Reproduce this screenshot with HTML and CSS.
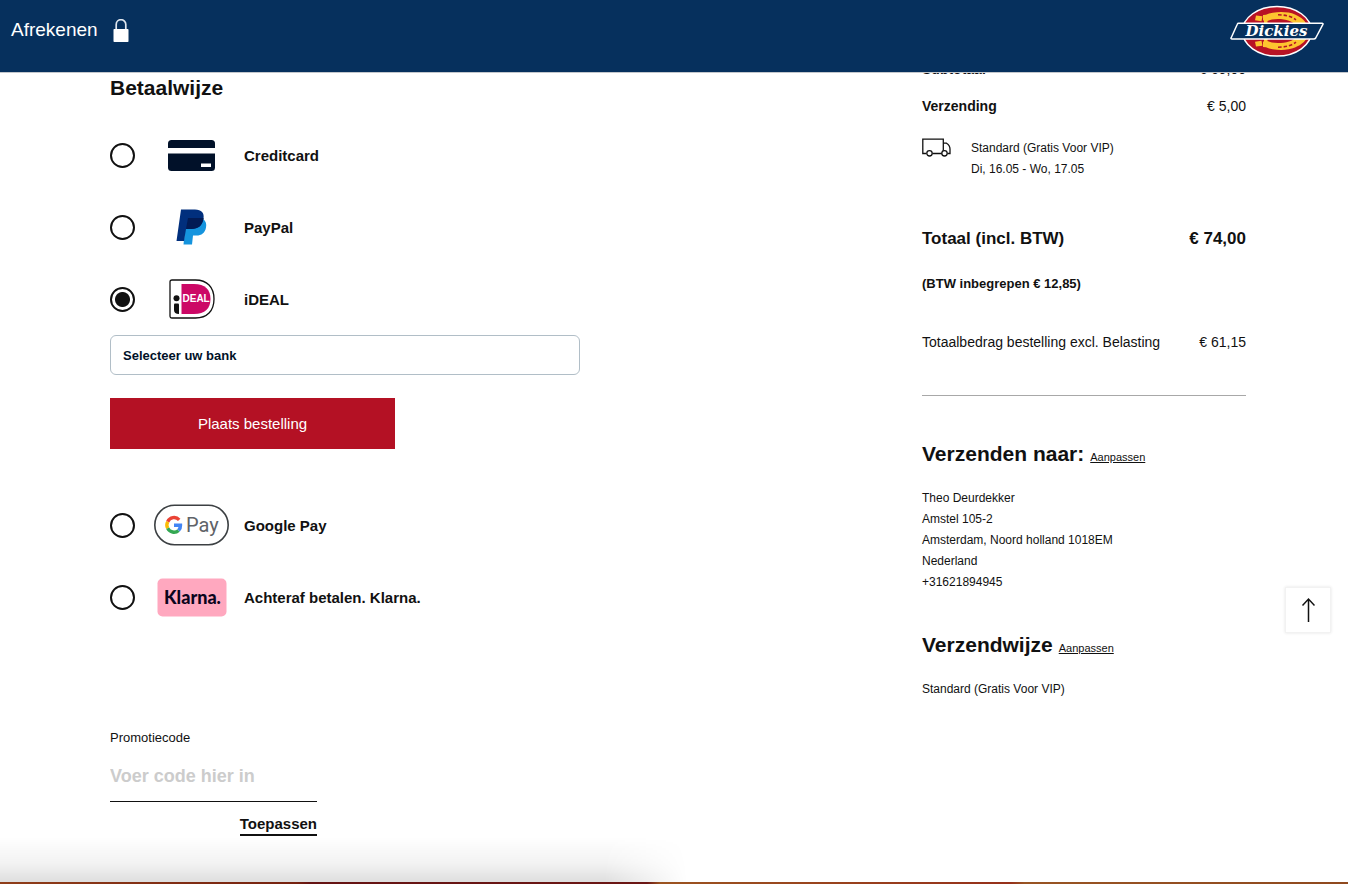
FILE: index.html
```html
<!DOCTYPE html>
<html lang="nl">
<head>
<meta charset="utf-8">
<meta name="viewport" content="width=device-width, initial-scale=1">
<title>Afrekenen</title>
<link rel="stylesheet" href="styles.css">
</head>
<body>
<header class="site-header">
  <div class="header-title">
    <span class="header-text">Afrekenen</span>
    <svg class="lock" width="16" height="24" viewBox="0 0 16 24" aria-hidden="true"><path d="M3.2 11V5.5a4.8 4.8 0 0 1 9.600 0V11" fill="none" stroke="#dfe6ee" stroke-width="1.700"/><rect x="0.500" y="10" width="15" height="13" rx="0.800" fill="#fff"/></svg>
  </div>
  <a href="#" class="logo" aria-label="Dickies">
    <svg width="94" height="52" viewBox="0 0 94 52">
      <ellipse cx="47" cy="26.300" rx="34.500" ry="24.800" fill="#b81325" stroke="#fff" stroke-width="1.500"/>
      <g fill="#fdc52f">
        <path d="M26 10.500l6.500.8-1 5-6.500-1z"/>
        <path d="M33 10l3-.2C43 6.500 57 6 65 9.500c7 3 11 7 12.500 12H67c-4-5.500-11-7.500-19-7.500-5 0-8 .8-10.500 2V22H34v-6.500h-1z"/>
        <path d="M26 41.500l6.500-.8-1-5-6.500 1z"/>
        <path d="M33 42l3 .2c7 3.300 21 3.800 29 .3 7-3 11-6.500 12.500-11.500H67c-4 5.500-11 7-19 7-5 0-8-.8-10.500-2v-6H34v6.500h-1z"/>
      </g>
      <g fill="none" stroke="#b81325" stroke-width="1.600" stroke-dasharray="3.500 2"><path d="M48 9.800c7 0 13 1.500 18 5"/><path d="M48 42.200c7 0 13-1.500 18-5"/></g>
      <path d="M8.500 18.300h83.500q1.500 0 .8 1.300L85.700 33q-.6 1-2 1H2q-1.500 0-.8-1.300L7.300 19.300q.4-1 1.200-1z" fill="#06305d" stroke="#fff" stroke-width="1.500"/>
      <text x="46.500" y="31" text-anchor="middle" class="logo-word">Dickies</text>
    </svg>
  </a>
</header>

<main class="checkout">
  <section class="payment">
    <form>
      <h2 class="heading">Betaalwijze</h2>
      <div class="methods">
        <label class="method">
          <input type="radio" name="pay">
          <span class="method-icon"><svg width="47" height="31" viewBox="0 0 47 31"><rect width="47" height="31" rx="3.500" fill="#011129"/><path d="M0 8h47v5.500H0zM33 23.500h10v3.500H33z" fill="#fff"/></svg></span>
          <span class="method-name">Creditcard</span>
        </label>
        <label class="method">
          <input type="radio" name="pay">
          <span class="method-icon"><svg width="31" height="36" viewBox="0 0 31 36"><path d="M10 10h17c3 2 3.700 5 3 8.500C29 24 25.500 26.500 20.500 26.500H17L16 35.500H7.500z" fill="#1594de"/><path d="M5 .5H19c6.500 0 9.500 3.500 8.500 9-1 7-5.500 10.500-12 10.500H10L8 32H.5z" fill="#012f7d"/><path d="M12 9h15.500q.1.200 0 .5c-1 7-5.500 10.500-12 10.500H10z" fill="#021b55"/></svg></span>
          <span class="method-name">PayPal</span>
        </label>
        <label class="method">
          <input type="radio" name="pay" checked>
          <span class="method-icon"><svg width="46" height="40" viewBox="0 0 46 40"><path d="M3 1h23.500C38 1 45 8 45 20S38 39 26.500 39H3q-2 0-2-2V3q0-2 2-2z" fill="#fff" stroke="#111" stroke-width="1.300"/><path d="M12.500 5H25c11 0 16.500 5.500 16.500 15S36 35 25 35H12.500z" fill="#cc0866"/><circle cx="7.500" cy="19.200" r="3" fill="#111"/><path d="M5 25.500q0-1 1-1h3q1 0 1 1V35q-5 0-5-4z" fill="#111"/><text x="13.500" y="22.500" class="ideal-word">DEAL</text></svg></span>
          <span class="method-name">iDEAL</span>
        </label>
      </div>
      <select class="bank" aria-label="Selecteer uw bank"><option>Selecteer uw bank</option></select>
      <button type="button" class="order">Plaats bestelling</button>
      <div class="methods methods-more">
        <label class="method">
          <input type="radio" name="pay">
          <span class="method-icon"><svg width="75" height="42" viewBox="0 0 75 42"><rect x="0.800" y="1.300" width="73.400" height="39.400" rx="19.700" fill="#fff" stroke="#3c4043" stroke-width="1.600"/>
            <g fill="none" stroke-width="3.400"><path d="M25.200 15.800A7 7 0 0 0 13.700 17.700" stroke="#ea4335"/><path d="M13.700 17.700A7 7 0 0 0 13.700 24.300" stroke="#fbbc04"/><path d="M13.700 24.300A7 7 0 0 0 24.600 26.400" stroke="#34a853"/><path d="M24.600 26.400A7 7 0 0 0 26.500 21.300H20" stroke="#4285f4"/></g>
            <text x="32" y="28" class="gpay-word">Pay</text></svg></span>
          <span class="method-name">Google Pay</span>
        </label>
        <label class="method">
          <input type="radio" name="pay">
          <span class="method-icon"><svg width="70" height="39" viewBox="0 0 70 39"><rect x="0.500" y="0.500" width="69" height="38" rx="5" fill="#ffa8bf"/><text x="35.500" y="26" text-anchor="middle" class="klarna-word">Klarna.</text></svg></span>
          <span class="method-name">Achteraf betalen. Klarna.</span>
        </label>
      </div>
    </form>
    <form class="promo">
      <label for="promo">Promotiecode</label>
      <input id="promo" type="text" placeholder="Voer code hier in">
      <button type="button">Toepassen</button>
    </form>
  </section>

  <aside class="summary">
    <div class="line"><strong>Subtotaal</strong><span>€ 69,00</span></div>
    <div class="line shipping"><strong>Verzending</strong><span>€ 5,00</span></div>
    <div class="delivery">
      <svg width="29" height="19" viewBox="0 0 29 19" fill="none" stroke="#111" stroke-width="1.300" aria-hidden="true"><path d="M4.500 15.500H.8V1.200h20.500v14.300H10.500M21.300 5.200h3.200q3.500 2.200 3.500 5.800v4.500h-2.500"/><circle cx="7.500" cy="15.300" r="2.700" fill="#fff"/><circle cx="22.500" cy="15.300" r="2.700" fill="#fff"/></svg>
      <p>Standard (Gratis Voor VIP)<br>Di, 16.05 - Wo, 17.05</p>
    </div>
    <div class="line total"><strong>Totaal (incl. BTW)</strong><strong>€ 74,00</strong></div>
    <p class="vat">(BTW inbegrepen € 12,85)</p>
    <div class="line net"><span>Totaalbedrag bestelling excl. Belasting</span><span>€ 61,15</span></div>
    <hr class="divider">
    <div class="heading-row"><h2 class="heading">Verzenden naar:</h2><a href="#">Aanpassen</a></div>
    <address class="details">Theo Deurdekker<br>Amstel 105-2<br>Amsterdam, Noord holland 1018EM<br>Nederland<br>+31621894945</address>
    <div class="heading-row method-heading"><h2 class="heading">Verzendwijze</h2><a href="#">Aanpassen</a></div>
    <p class="details">Standard (Gratis Voor VIP)</p>
  </aside>
</main>

<button type="button" class="to-top" aria-label="Naar boven"><svg width="14" height="26" viewBox="0 0 14 26" fill="none" stroke="#111" stroke-width="1.500"><path d="M7.500 25V2M1.500 8.500l6-6.500 6 6.500"/></svg></button>
<div class="window-shadow"></div>
<div class="desktop-edge"></div>
</body>
</html>
```
FILE: styles.css
```css
* { box-sizing: border-box; }

body {
  margin: 0;
  min-height: 100vh;
  background: #fff;
  color: #111;
  font-family: "Liberation Sans", Arial, sans-serif;
  font-size: 14px;
  line-height: 20px;
}

h2, p { margin: 0; }
button, input, select { font-family: inherit; color: inherit; }

.site-header {
  position: fixed;
  top: 0;
  left: 0;
  right: 0;
  z-index: 2;
  display: flex;
  align-items: center;
  justify-content: space-between;
  height: 73px;
  padding: 0 24px 10px 11px;
  background: #06305d;
  border-bottom: 1px solid #c3c7cc;
}

.header-title {
  display: flex;
  align-items: center;
  gap: 15px;
  color: #fff;
  font-size: 19px;
  line-height: 24px;
}

.header-text { padding-bottom: 3px; }

.lock, .logo svg, .method-icon svg { display: block; }

.logo-word {
  font: italic bold 15px "DejaVu Serif", serif;
  fill: #fff;
}

.ideal-word {
  font: bold 10px "Liberation Sans", sans-serif;
  fill: #fff;
}

.gpay-word {
  font: 20px Roboto, sans-serif;
  fill: #5f6368;
}

.klarna-word {
  font: 900 18px Lato, sans-serif;
  fill: #0b051d;
}

.checkout {
  display: grid;
  grid-template-columns: minmax(0, 1fr) 324px;
  padding: 0 102px 0 110px;
}

.heading {
  font-size: 21px;
  line-height: 28px;
  font-weight: bold;
}

.payment { padding-top: 74px; }
.methods { margin-top: 17px; }
.methods-more { margin-top: 40px; }

.method {
  display: flex;
  align-items: center;
  height: 72px;
  font-size: 15px;
  font-weight: bold;
}

.method-name { padding-top: 2px; }

.method input {
  appearance: none;
  width: 25px;
  height: 25px;
  margin: 0 19px 0 0;
  border: 2px solid #111;
  border-radius: 50%;
}

.method input:checked {
  background: radial-gradient(circle, #111 7px, #fff 8px);
}

.method-icon {
  display: flex;
  justify-content: center;
  width: 75px;
  margin-right: 15px;
}

.bank {
  appearance: none;
  display: block;
  width: 100%;
  max-width: 470px;
  height: 40px;
  padding: 0 12px;
  border: 1px solid #b1bec7;
  border-radius: 6px;
  background: #fff;
  color: #001128;
  font-size: 13px;
  font-weight: bold;
}

.order {
  display: block;
  width: 285px;
  height: 51px;
  margin-top: 23px;
  border: 0;
  background: #b41124;
  color: #fff;
  font-size: 15px;
}

.promo {
  display: flex;
  flex-direction: column;
  width: 207px;
  margin-top: 95px;
  font-size: 13px;
}

.promo input {
  width: 100%;
  height: 46px;
  margin-top: 8px;
  padding: 0 0 5px;
  border: 0;
  border-bottom: 1px solid #111;
  background: transparent;
  font-size: 18px;
  font-weight: bold;
}

.promo input::placeholder { color: #ccc; opacity: 1; }

.promo button {
  align-self: flex-end;
  height: 24px;
  margin-top: 10px;
  padding: 0;
  border: 0;
  border-bottom: 2px solid #111;
  background: none;
  font-size: 15px;
  font-weight: bold;
}

.summary { padding-top: 59px; }

.line {
  display: flex;
  justify-content: space-between;
}

.shipping { margin-top: 17px; }

.delivery {
  display: flex;
  gap: 20px;
  margin-top: 22px;
  font-size: 12px;
  line-height: 21px;
}

.total {
  margin-top: 47px;
  font-size: 17px;
  line-height: 24px;
}

.vat {
  margin-top: 23px;
  font-size: 13px;
  font-weight: bold;
}

.net { margin-top: 38px; }

.divider {
  height: 1px;
  margin: 43px 0 44px;
  border: 0;
  background: #a8a8a8;
}

.heading-row {
  display: flex;
  align-items: baseline;
  gap: 6px;
}

.heading-row a {
  color: #111;
  font-size: 11px;
}

.method-heading { margin-top: 38px; }

.details {
  margin-top: 20px;
  font-size: 12px;
  font-style: normal;
  line-height: 21px;
}

.to-top {
  position: fixed;
  right: 17px;
  bottom: 251px;
  display: flex;
  align-items: center;
  justify-content: center;
  width: 46px;
  height: 46px;
  padding: 0;
  border: 1px solid #f2f2f2;
  background: #fff;
  box-shadow: 0 0 3px #e4e4e4;
}

.window-shadow {
  position: fixed;
  left: 0;
  bottom: 2px;
  width: 51%;
  height: 45px;
  background: linear-gradient(to top, rgba(0, 0, 0, .13), rgba(0, 0, 0, .05) 40%, transparent);
  mask-image: linear-gradient(to right, #000 88%, transparent);
  pointer-events: none;
}

.desktop-edge {
  position: fixed;
  left: 0;
  right: 0;
  bottom: 0;
  height: 2px;
  background: linear-gradient(to right, #8f3d19 0, #76220f 22%, #651313 23%, #6b1614 48%, #9b5420 49%, #96301a 75%, #985423 76%, #8f491e 100%);
}
```
